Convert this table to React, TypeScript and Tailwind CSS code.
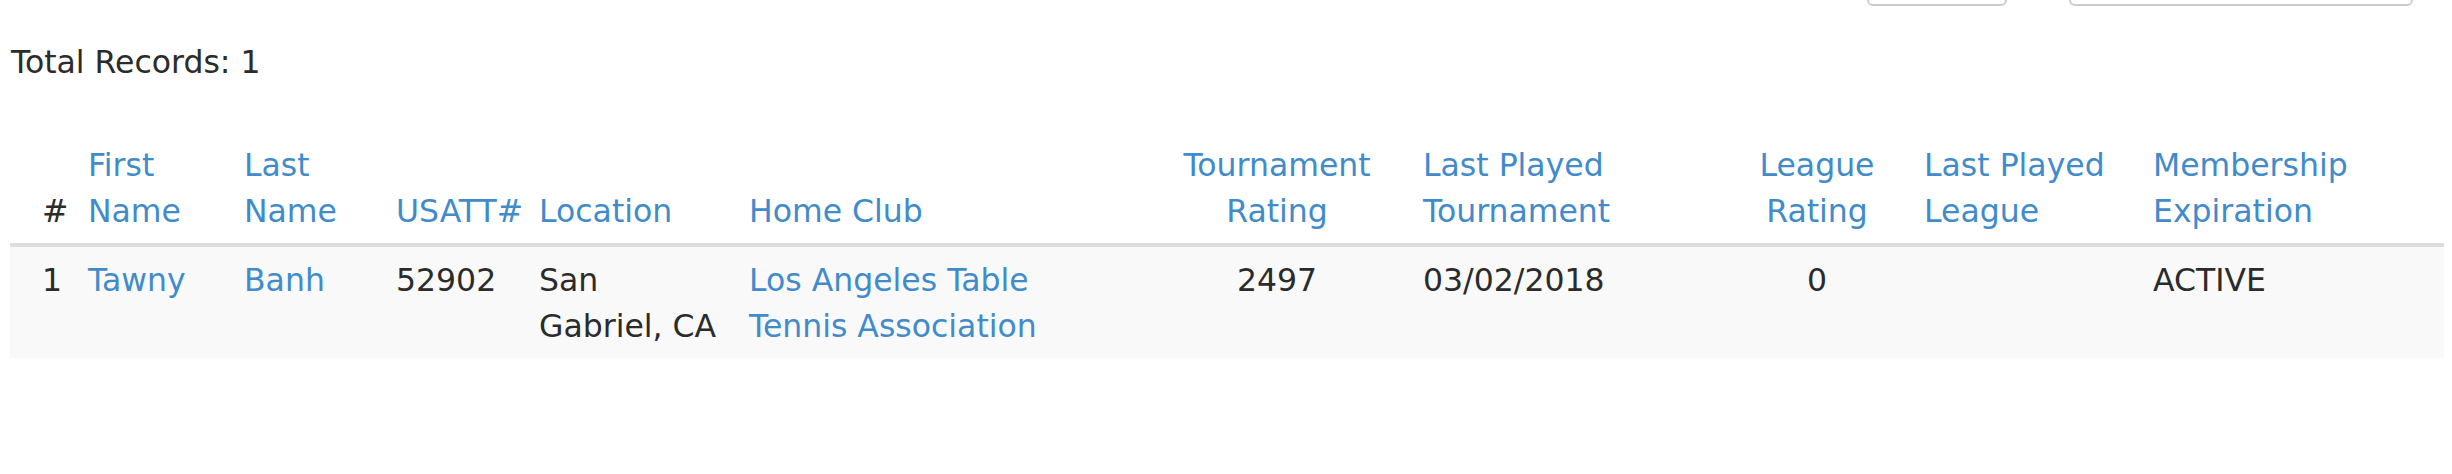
import React from "react";

const blue = "text-[#428bca]";

export default function App() {
  return (
    <div className="min-h-[474px] w-[2452px] bg-white font-['DejaVu_Sans',sans-serif] text-[31.5px] leading-[46px] text-[#2b2b2b]">
      <div className="flex h-[6px] items-end justify-end gap-[62px] overflow-hidden pr-[39px]">
        <div className="h-[40px] w-[140px] shrink-0 rounded-[6px] border-2 border-[#cccccc]" />
        <div className="h-[40px] w-[344px] shrink-0 rounded-[6px] border-2 border-[#cccccc]" />
      </div>
      <div className="mt-[33px] pl-[11px]">Total Records: 1</div>
      <table className="ml-[10px] mt-[46px] w-[2434px] table-fixed border-collapse">
        <colgroup>
          <col className="w-[78px]" />
          <col className="w-[156px]" />
          <col className="w-[152px]" />
          <col className="w-[143px]" />
          <col className="w-[210px]" />
          <col className="w-[414px]" />
          <col className="w-[260px]" />
          <col className="w-[319px]" />
          <col className="w-[182px]" />
          <col className="w-[229px]" />
          <col className="w-[291px]" />
        </colgroup>
        <thead>
          <tr className="border-b-4 border-[#dddddd] align-bottom font-normal">
            <th className="pb-[9px] pl-[32px] pt-[11px] text-left font-normal">#</th>
            <th className={`pb-[9px] pt-[11px] text-left font-normal ${blue}`}>
              First<br />Name
            </th>
            <th className={`pb-[9px] pt-[11px] text-left font-normal ${blue}`}>
              Last<br />Name
            </th>
            <th className={`pb-[9px] pt-[11px] text-left font-normal ${blue}`}>USATT#</th>
            <th className={`pb-[9px] pt-[11px] text-left font-normal ${blue}`}>Location</th>
            <th className={`pb-[9px] pt-[11px] text-left font-normal ${blue}`}>Home Club</th>
            <th className={`pb-[9px] pr-[32px] pt-[11px] text-center font-normal ${blue}`}>
              Tournament<br />Rating
            </th>
            <th className={`pb-[9px] pt-[11px] text-left font-normal ${blue}`}>
              Last Played<br />Tournament
            </th>
            <th className={`pb-[9px] pr-[32px] pt-[11px] text-center font-normal ${blue}`}>
              League<br />Rating
            </th>
            <th className={`pb-[9px] pt-[11px] text-left font-normal ${blue}`}>
              Last Played<br />League
            </th>
            <th className={`pb-[9px] pt-[11px] text-left font-normal ${blue}`}>
              Membership<br />Expiration
            </th>
          </tr>
        </thead>
        <tbody>
          <tr className="bg-[#f9f9f9] align-top">
            <td className="pb-[9px] pl-[32px] pt-[10px]">1</td>
            <td className={`pb-[9px] pt-[10px] ${blue}`}>Tawny</td>
            <td className={`pb-[9px] pt-[10px] ${blue}`}>Banh</td>
            <td className="pb-[9px] pt-[10px]">52902</td>
            <td className="pb-[9px] pt-[10px]">
              San<br />Gabriel, CA
            </td>
            <td className={`pb-[9px] pt-[10px] ${blue}`}>
              Los Angeles Table<br />Tennis Association
            </td>
            <td className="pb-[9px] pr-[32px] pt-[10px] text-center">2497</td>
            <td className="pb-[9px] pt-[10px]">03/02/2018</td>
            <td className="pb-[9px] pr-[32px] pt-[10px] text-center">0</td>
            <td className="pb-[9px] pt-[10px]"></td>
            <td className="pb-[9px] pt-[10px]">ACTIVE</td>
          </tr>
        </tbody>
      </table>
    </div>
  );
}
